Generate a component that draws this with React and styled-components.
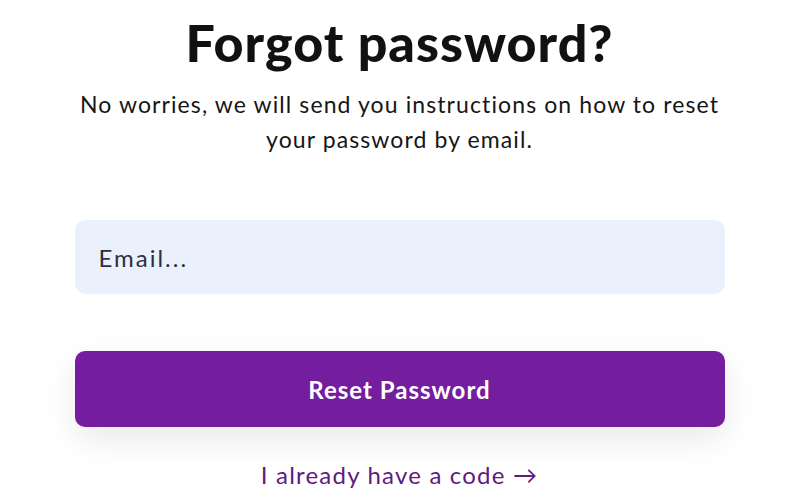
import React from "react";
import styled, { createGlobalStyle } from "styled-components";

const GlobalStyle = createGlobalStyle`
  * { box-sizing: border-box; margin: 0; padding: 0; }
  body {
    background: #ffffff;
    font-family: "Lato", "Noto Sans", sans-serif;
    color: #111111;
  }
`;

const Page = styled.div`
  width: 100%;
  display: flex;
  justify-content: center;
  padding-top: 12px;
`;

const Card = styled.form`
  width: 650px;
  display: flex;
  flex-direction: column;
  align-items: stretch;
  text-align: center;
`;

const Title = styled.h1`
  font-size: 52px;
  font-weight: 900;
  line-height: 60px;
  letter-spacing: 1px;
  color: #111111;
`;

const Subtitle = styled.p`
  margin-top: 15px;
  font-size: 23px;
  line-height: 35px;
  letter-spacing: 1.1px;
  color: #161616;
`;

const EmailInput = styled.input`
  margin-top: 63px;
  height: 74px;
  width: 100%;
  border: none;
  outline: none;
  border-radius: 10px;
  background: #eaf1fd;
  padding: 0 24px;
  font-family: inherit;
  font-size: 24px;
  letter-spacing: 1px;
  color: #2b2d3a;
  &::placeholder {
    color: #2e3040;
    letter-spacing: 2px;
  }
`;

const ResetButton = styled.button`
  margin-top: 57px;
  height: 76px;
  width: 100%;
  border: none;
  border-radius: 10px;
  background: #741d9e;
  color: #ffffff;
  font-family: inherit;
  font-size: 24px;
  font-weight: 700;
  letter-spacing: 1px;
  cursor: pointer;
  box-shadow: 0 12px 32px rgba(0, 0, 0, 0.09);
`;

const CodeLink = styled.a`
  margin-top: 33px;
  align-self: center;
  font-size: 24px;
  letter-spacing: 1.2px;
  color: #5f1a80;
  text-decoration: none;
  cursor: pointer;
`;

export default function App() {
  return (
    <>
      <GlobalStyle />
      <Page>
        <Card onSubmit={(e) => e.preventDefault()}>
          <Title>Forgot password?</Title>
          <Subtitle>
            No worries, we will send you instructions on how to reset your
            password by email.
          </Subtitle>
          <EmailInput type="email" placeholder="Email..." />
          <ResetButton type="submit">Reset Password</ResetButton>
          <CodeLink href="#">I already have a code →</CodeLink>
        </Card>
      </Page>
    </>
  );
}
